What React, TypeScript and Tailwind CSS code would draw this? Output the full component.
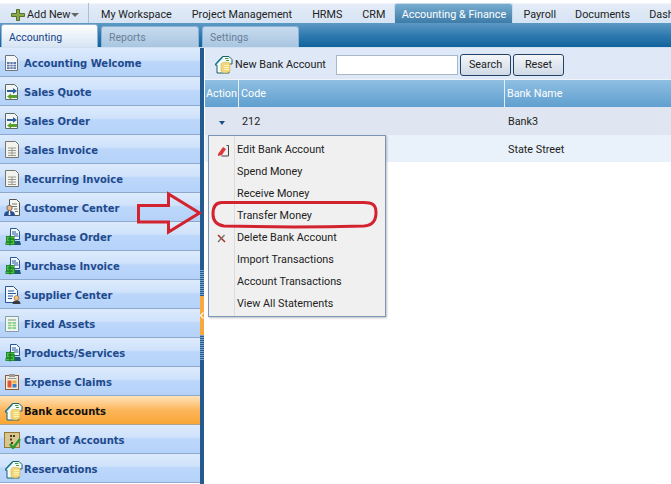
import React from 'react'

const font = { fontFamily: 'Roboto, sans-serif' }

function DocIcon() {
    return (
        <svg width="16" height="18" viewBox="0 0 16 18">
            <path d="M1.500 .5h10l3 3v13h-13z" fill="#f3f3ee" stroke="#77776e" />
            <path d="M4 7h8M4 9.500h8M4 12h8M4 14.500h8M8 7v7.500" stroke="#9a9a90" fill="none" />
        </svg>
    )
}

function CalcIcon() {
    return (
        <svg width="16" height="18" viewBox="0 0 16 18">
            <path d="M1.500 1.500h9l3 3v12h-12z" fill="#f4f6f8" stroke="#6c7480" />
            <rect x="3" y="8" width="9" height="7" fill="#5d78a8" />
            <path d="M3 10.500h9M3 12.800h9M6 8v7M9 8v7" stroke="#fff" strokeWidth=".7" />
        </svg>
    )
}

function QuoteIcon() {
    return (
        <svg width="16" height="18" viewBox="0 0 16 18">
            <path d="M1.500 1.500h9l3 3v12h-12z" fill="#f4f6f4" stroke="#5e6a66" />
            <path d="M3 7h6V5l4 3-4 3V9H3z" fill="#2d5f9e" />
            <path d="M13 12H7v-1.500L3 13.500l4 3V15h6z" fill="#5aa02c" />
        </svg>
    )
}

function PersonDocIcon() {
    return (
        <svg width="17" height="18" viewBox="0 0 17 18">
            <path d="M5.500 .5h7l3 3v13h-10z" fill="#f6f6f2" stroke="#55554f" />
            <path d="M8 5h5M8 7.500h5M10 10h3.500M11 12.500h3" stroke="#77776f" />
            <circle cx="5.500" cy="9" r="2.700" fill="#e5b78c" stroke="#3f3126" strokeWidth=".6" />
            <path d="M0 17c0-4 2-5 5.500-5s5.500 1 5.500 5z" fill="#2b4f90" />
            <path d="M5 12h1l.4 4h-1.800z" fill="#fff" />
        </svg>
    )
}

function DollarDocIcon() {
    return (
        <svg width="18" height="18" viewBox="0 0 18 18">
            <path d="M6.500 .5h6l3 3v8h-9z" fill="#f3f8fd" stroke="#26569a" />
            <path d="M8 4h4M8 6h6M10 8h4.500" stroke="#26569a" />
            <path d="M10 13h6l1 4h-7z" fill="#1f5878" />
            <path d="M10.500 9.500H3.500v3h6v3H1.500" fill="none" stroke="#1f7a2c" strokeWidth="3" />
            <path d="M10 9.500H3.500v3h6v3H2" fill="none" stroke="#46c23f" strokeWidth="1.400" />
            <path d="M6 7.500v10" stroke="#1f7a2c" strokeWidth="1.200" />
        </svg>
    )
}

function SupplierIcon() {
    return (
        <svg width="17" height="18" viewBox="0 0 17 18">
            <path d="M1.500 .5h8l4 4v12h-12z" fill="#f4f8fc" stroke="#26569a" />
            <path d="M4 5h6M4 7.500h8M4 10h5M4 12.500h4" stroke="#26569a" />
            <circle cx="12.500" cy="12" r="2.500" fill="#f0bd80" stroke="#7a4a20" strokeWidth=".5" />
            <path d="M8.500 18c0-2.500 1.500-3.500 4-3.500s4 1 4 3.500z" fill="#3a3a3a" />
        </svg>
    )
}

function AssetIcon() {
    return (
        <svg width="16" height="18" viewBox="0 0 16 18">
            <path d="M1.500 1.500h13v15h-13z" fill="#eef4ee" stroke="#86a0a8" />
            <path d="M4 5h8" stroke="#7a9a80" />
            <rect x="4" y="7" width="8" height="7" fill="#8ccf88" />
            <path d="M4 9.300h8M4 11.600h8M8 7v7" stroke="#fff" strokeWidth=".7" />
        </svg>
    )
}

function ClaimIcon() {
    return (
        <svg width="16" height="18" viewBox="0 0 16 18">
            <rect x="1.500" y="2.500" width="13" height="14" fill="#f3ead9" stroke="#8a5b35" />
            <rect x="5" y="1" width="6" height="3" fill="#9a9a9a" />
            <path d="M3.500 5.500h9" stroke="#9a9a9a" />
            <rect x="3.500" y="7.500" width="4" height="7" fill="#e2582c" />
            <rect x="8.500" y="7.500" width="4" height="3" fill="#e8b040" />
            <rect x="8.500" y="11" width="4" height="3.500" fill="#3d7cc9" />
        </svg>
    )
}

function BankIcon() {
    return (
        <svg width="19" height="19" viewBox="0 0 19 19">
            <path d="M1 10 8.500 1.500H15l3 3V9h-3v9H3v-8z" fill="#f2fafb" stroke="#17606e" />
            <path d="M1.500 9.500 8.500 2" stroke="#1d7d8f" strokeWidth="1.600" />
            <path d="M11 3.500h3.500M12 5.500h3" stroke="#4f9a3c" strokeWidth="1.200" />
            <path d="M7 10c0-2.500 3-3 5-2.500l4 .5v8c-2 2.500-7 2.500-9 0z" fill="#f3d77b" stroke="#d8b24d" strokeWidth=".6" />
            <path d="M10 10.500h5M10 12.500h5M10 14.500h5" stroke="#fff3bd" />
        </svg>
    )
}

function ChartIcon() {
    return (
        <svg width="17" height="18" viewBox="0 0 17 18">
            <rect x=".5" y="1.500" width="15" height="15" fill="#d9c68e" stroke="#94763a" />
            <path d="M6 4h2v2H6zM9 4h2v2H9zM6 7.500h2v2H6zM7 11h2v2H7z" fill="#4a3a1f" />
            <path d="M6 13l3 4 7-9" stroke="#2a9a2a" strokeWidth="2.400" fill="none" />
        </svg>
    )
}

const sideItems = [
    { label: 'Accounting Welcome', icon: <CalcIcon /> },
    { label: 'Sales Quote', icon: <QuoteIcon /> },
    { label: 'Sales Order', icon: <QuoteIcon /> },
    { label: 'Sales Invoice', icon: <DocIcon /> },
    { label: 'Recurring Invoice', icon: <DocIcon /> },
    { label: 'Customer Center', icon: <PersonDocIcon /> },
    { label: 'Purchase Order', icon: <DollarDocIcon /> },
    { label: 'Purchase Invoice', icon: <DollarDocIcon /> },
    { label: 'Supplier Center', icon: <SupplierIcon /> },
    { label: 'Fixed Assets', icon: <AssetIcon /> },
    { label: 'Products/Services', icon: <DollarDocIcon /> },
    { label: 'Expense Claims', icon: <ClaimIcon /> },
    { label: 'Bank accounts', icon: <BankIcon />, active: true },
    { label: 'Chart of Accounts', icon: <ChartIcon /> },
    { label: 'Reservations', icon: <BankIcon /> },
]

const menuItems = [
    'Edit Bank Account',
    'Spend Money',
    'Receive Money',
    'Transfer Money',
    'Delete Bank Account',
    'Import Transactions',
    'Account Transactions',
    'View All Statements',
]

const topItems = ['My Workspace', 'Project Management', 'HRMS', 'CRM']

function SubTab({ label, active, width }: { label: string, active?: boolean, width: string }) {
    return (
        <div className={active
            ? `${width} h-[23px] mr-[3px] pl-[7px] pt-[5px] rounded-t-[3px] border border-b-0 border-[#8db2d8] bg-gradient-to-b from-[#ffffff] to-[#d6e4f3] text-[#15428b] text-[10.500px]`
            : `${width} h-[21px] mr-[3px] pl-[7px] pt-[3px] rounded-t-[3px] border border-b-0 border-[#8db2d8] bg-gradient-to-b from-[#c7dbee] to-[#a9c6e0] text-[#6a7f98] text-[10.500px]`}>
            {label}
        </div>
    )
}

export default function App() {
    return (
        <div style={font} className="relative w-[671px] h-[484px] overflow-hidden bg-white text-[10.800px] text-[#222]">
            <div className="h-[23px] pt-[3px] flex items-center bg-[linear-gradient(#ffffff_0,#ffffff_3px,#e4edf8_4px,#d6e3f3_100%)] whitespace-nowrap">
                <div className="w-[89px] h-[20px] pt-[4px] shrink-0 flex items-center pl-[11px] border-r border-[#a9bfd6]">
                    <svg width="15" height="14" viewBox="0 0 15 14">
                        <path d="M5.500 1.500h3v4h5v3h-5v4h-3v-4h-5v-3h5z" fill="#8aa94a" stroke="#55702a" />
                    </svg>
                    <span className="ml-[1px]">Add New</span>
                    <span className="ml-[1px] w-0 h-0 border-x-[4px] border-x-transparent border-t-[4px] border-t-[#666]" />
                </div>
                <div className="flex ml-[12px] pt-[4px] gap-[20px] shrink-0">
                    {topItems.map((item) => <span key={item}>{item}</span>)}
                </div>
                <div className="ml-[9px] h-[20px] w-[119px] pt-[4px] shrink-0 flex items-center justify-center rounded-t-[3px] border border-b-0 border-[#c7dcef] bg-gradient-to-b from-[#78add0] to-[#3d7ba8] text-white">
                    Accounting &amp; Finance
                </div>
                <div className="flex ml-[10px] pt-[4px] gap-[19px] shrink-0">
                    <span>Payroll</span>
                    <span>Documents</span>
                    <span>Dash</span>
                </div>
            </div>

            <div className="h-[24px] flex items-end pl-[1px] bg-gradient-to-b from-[#5d9ac6] via-[#2f7bb0] to-[#0f639c]">
                <SubTab label="Accounting" active width="w-[97px]" />
                <SubTab label="Reports" width="w-[98px]" />
                <SubTab label="Settings" width="w-[97px]" />
            </div>

            <div className="flex h-[437px] border-t border-[#cfe0f2]">
                <div className="w-[200px] shrink-0">
                    {sideItems.map((item) => (
                        <div key={item.label} className={item.active
                            ? 'h-[29px] flex items-center pl-[4px] pt-[2px] border-b border-[#b0a58c] bg-gradient-to-b from-[#fde3b8] via-[#fdb65a] to-[#f9a635]'
                            : 'h-[29px] flex items-center pl-[4px] pt-[2px] border-b border-[#8fa9cc] bg-[linear-gradient(#dceafc_0%,#d0e3fb_42%,#bcd7fa_50%,#b5d2f9_100%)]'}>
                            <span className="w-[20px] flex justify-start">{item.icon}</span>
                            <span style={{ fontFamily: '"DejaVu Sans", sans-serif' }} className={item.active ? 'text-[10px] font-bold text-[#111]' : 'text-[10px] font-bold text-[#1f4a8c]'}>{item.label}</span>
                        </div>
                    ))}
                </div>

                <div className="w-[4px] shrink-0 flex flex-col bg-[#255a8e]">
                    <div className="h-[222px]" />
                    <div className="h-[26px] bg-[repeating-linear-gradient(#7aa3cc_0,#7aa3cc_1px,#255a8e_1px,#255a8e_2px)]" />
                    <div className="h-[39px] flex items-center bg-[#f9a83c]">
                        <svg width="4" height="7" viewBox="0 0 4 7">
                            <path d="M3.500 .5 .5 3.500l3 3" fill="none" stroke="#fff" strokeWidth="1.200" />
                        </svg>
                    </div>
                    <div className="h-[25px] bg-[repeating-linear-gradient(#7aa3cc_0,#7aa3cc_1px,#255a8e_1px,#255a8e_2px)]" />
                </div>

                <div className="ml-[1px] flex-1 min-w-0 whitespace-nowrap">
                    <div className="h-[31px] pt-[2px] flex items-center pl-[9px] bg-[#dfe8f6]">
                        <BankIcon />
                        <span className="ml-[2px] pt-[1px] w-[101px]">New Bank Account</span>
                        <input className="w-[122px] h-[20px] bg-white border border-[#a9b8c8]" />
                        <button className="ml-[2px] w-[51px] h-[22px] pt-[1px] rounded-[3px] border border-[#1f4468] bg-gradient-to-b from-[#f4f6f8] to-[#cfd9e5]">Search</button>
                        <button className="ml-[2px] w-[51px] h-[22px] pt-[1px] rounded-[3px] border border-[#1f4468] bg-gradient-to-b from-[#f4f6f8] to-[#cfd9e5]">Reset</button>
                    </div>
                    <div className="h-[28px] flex items-center text-white bg-gradient-to-b from-[#8fbfe2] to-[#5f9fcf] border-t border-[#eef4fa]">
                        <div className="w-[34px] h-full pt-[1px] flex items-center justify-center border-r border-[#e4eef7]">Action</div>
                        <div className="w-[266px] h-full pt-[1px] flex items-center pl-[2px] border-r border-[#e4eef7]">Code</div>
                        <div className="pl-[2px] pt-[1px]">Bank Name</div>
                    </div>
                    <div className="h-[28px] pt-[3px] flex items-center bg-[#dfe6f1]">
                        <div className="w-[34px] flex justify-center">
                            <span className="w-0 h-0 border-x-[3px] border-x-transparent border-t-[4px] border-t-[#1f4f86]" />
                        </div>
                        <div className="w-[267px] pl-[3px]">212</div>
                        <div className="pl-[2px]">Bank3</div>
                    </div>
                    <div className="h-[27px] pt-[3px] flex items-center bg-[#e9f1fb]">
                        <div className="w-[301px]" />
                        <div className="pl-[2px]">State Street</div>
                    </div>
                </div>
            </div>

            <div className="absolute left-[208px] top-[135px] w-[178px] h-[182px] pt-[3px] border border-[#7d95b5] shadow-[1px_1px_2px_rgba(0,0,0,0.25)] bg-[#f0f0f0]">
                <div className="absolute left-[25px] top-0 bottom-0 w-[1px] bg-[#dcdcdc]" />
                {menuItems.map((item, index) => (
                    <div key={item} className="h-[22px] flex items-center">
                        <span className="w-[28px] pl-[8px] flex items-center">
                            {index === 0 && (
                                <svg width="12" height="13" viewBox="0 0 12 13">
                                    <path d="M9.500 1.500h2v10.500h-7" stroke="#444" fill="none" />
                                    <path d="M1 10 6 3l3 2-4 6-4 1z" fill="#dc3a3a" />
                                </svg>
                            )}
                            {index === 4 && (
                                <svg width="9" height="9" viewBox="0 0 9 9">
                                    <path d="M1 1l7 7" stroke="#b53228" strokeWidth="1.600" />
                                    <path d="M7.500 1 1 8" stroke="#6d6d6d" strokeWidth="1.200" />
                                </svg>
                            )}
                        </span>
                        <span>{item}</span>
                    </div>
                ))}
            </div>

            <svg className="absolute left-[135px] top-[191px]" width="70" height="44" viewBox="0 0 70 44">
                <path d="M3.500 14.500h30V3l31 19-31 19V31h-30z" fill="none" stroke="#d2232f" strokeWidth="3" />
            </svg>
            <svg className="absolute left-[210px] top-[199px]" width="170" height="31" viewBox="0 0 170 31">
                <path d="M12 3.500h142c8 0 12 2 12 10s-3 13-12 13.500c-40 1-100 1-140 0C6 26 3 21 3 15 3 7 6 3.500 12 3.500z" fill="none" stroke="#d2232f" strokeWidth="3" />
            </svg>
        </div>
    )
}
